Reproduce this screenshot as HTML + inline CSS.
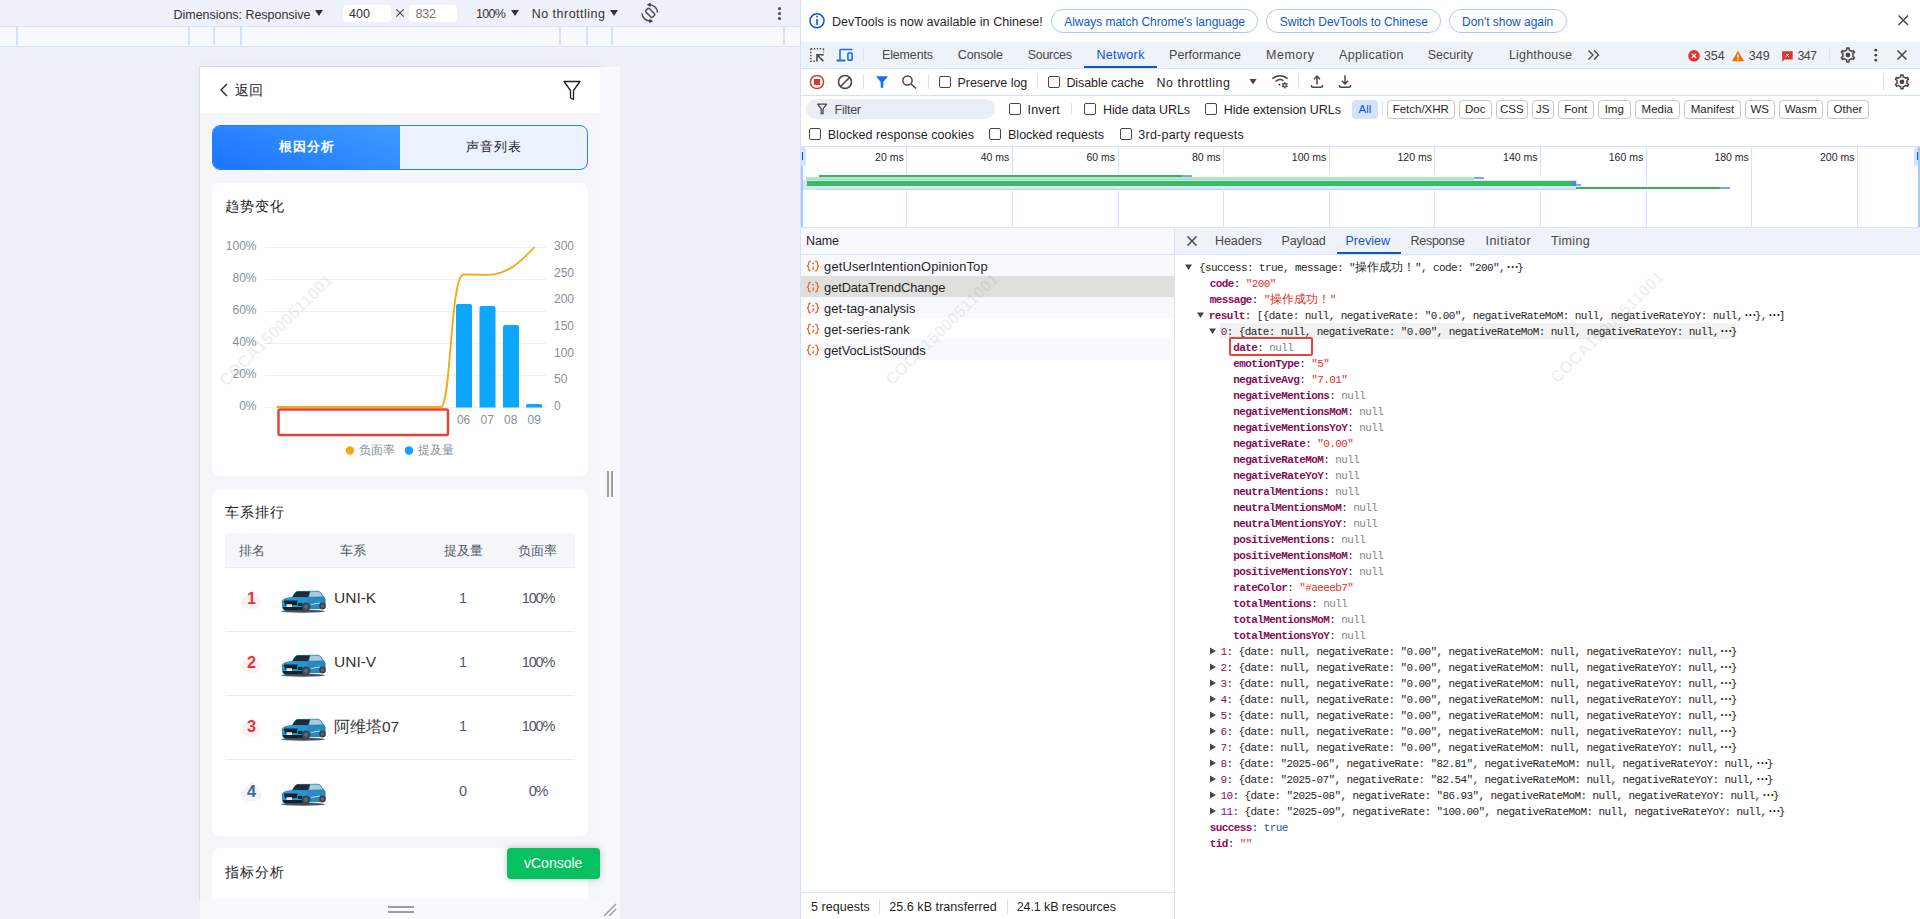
<!DOCTYPE html>
<html><head><meta charset="utf-8">
<style>
*{box-sizing:border-box;margin:0;padding:0}
html,body{width:1920px;height:919px;overflow:hidden;background:#fff;font-family:"Liberation Sans",sans-serif;color:#1f1f1f}
.a{position:absolute;white-space:pre}
#left{position:absolute;left:0;top:0;width:800px;height:919px;background:#eef1f8;overflow:hidden}
#dt{position:absolute;left:800px;top:0;width:1120px;height:919px;background:#fff;border-left:1px solid #d3e3fd;overflow:hidden}
.tb{color:#1f1f1f;line-height:17px}
.tri{width:0;height:0;border-left:4px solid transparent;border-right:4px solid transparent;border-top:6px solid #333}
.th{font-size:13px;color:#4e5969;line-height:16px}
.jl{font-family:"Liberation Mono",monospace;font-size:11px;line-height:12px;letter-spacing:-0.6px;color:#111}
.cj{font-size:12px;letter-spacing:0;font-weight:normal}
.el{letter-spacing:-3.2px;font-weight:bold;font-size:12px}
</style></head><body>
<div id="left">
  <div class="a" style="left:0;top:0;width:800px;height:26px;background:#eef1f9"></div>
  <div class="a" style="left:0;top:26px;width:800px;height:21px;background:#f8f9fd;border-top:1px solid #d3e3fd;border-bottom:1px solid #d3e3fd"></div>
  <div class="a" style="left:16px;top:27px;width:2px;height:18px;background:#d3e3fd"></div>
  <div class="a" style="left:188px;top:27px;width:2px;height:18px;background:#d3e3fd"></div>
  <div class="a" style="left:213px;top:27px;width:2px;height:18px;background:#d3e3fd"></div>
  <div class="a" style="left:240px;top:27px;width:2px;height:18px;background:#d3e3fd"></div>
  <div class="a" style="left:559px;top:27px;width:2px;height:18px;background:#d3e3fd"></div>
  <div class="a" style="left:586px;top:27px;width:2px;height:18px;background:#d3e3fd"></div>
  <div class="a" style="left:611px;top:27px;width:2px;height:18px;background:#d3e3fd"></div>
  <div class="a" style="left:783px;top:27px;width:2px;height:18px;background:#d3e3fd"></div>
  <div class="a tri" style="left:314.5px;top:10px"></div>
  <div class="a" style="left:343px;top:5px;width:48px;height:17px;background:#fff;border-radius:4px"></div>
  <svg class="a" style="left:395px;top:8px" width="10" height="10"><path d="M1.3 1.3 L8.7 8.7 M8.7 1.3 L1.3 8.7" stroke="#474747" stroke-width="1.1"/></svg>
  <div class="a" style="left:409px;top:5px;width:48px;height:17px;background:#fff;border-radius:4px"></div>
  <div class="a tri" style="left:510.5px;top:10px"></div>
  <div class="a tri" style="left:609.5px;top:10px"></div>
  <svg class="a" style="left:636px;top:0px" width="28" height="26" viewBox="0 0 28 26"><g fill="none" stroke="#474747" stroke-width="1.4"><rect x="-2.4" y="-4.7" width="4.8" height="9.4" rx="1" transform="translate(14.2,12.9) rotate(-45)"/><path d="M13.5 4.6 A8.6 8.6 0 0 1 21.6 12.6"/><path d="M5.9 13.3 A8.6 8.6 0 0 0 14.5 21.1"/></g><path d="M10.8 4.4 L14.8 2.4 L14.6 7.2 Z" fill="#474747"/><path d="M17.2 21.3 L13.2 23.3 L13.4 18.6 Z" fill="#474747"/></svg>
  <div class="a" style="left:778px;top:7px;width:3px;height:3px;border-radius:50%;background:#474747;box-shadow:0 5px 0 #474747,0 10px 0 #474747"></div>

  <!-- mobile viewport -->
  <div class="a" style="left:200px;top:67px;width:400px;height:832px;background:#f5f6fa;box-shadow:0 0 0 1px rgba(0,0,0,.07),0 0 14px rgba(0,0,0,.05)"></div>
  <div class="a" style="left:600px;top:67px;width:20px;height:852px;background:#f8f9fd"></div>
  <div class="a" style="left:200px;top:899px;width:420px;height:20px;background:#f8f9fd"></div>
  <div class="a" style="left:607px;top:471px;width:2px;height:26px;background:#9e9e9e"></div>
  <div class="a" style="left:611px;top:471px;width:2px;height:26px;background:#9e9e9e"></div>
  <div class="a" style="left:388px;top:906px;width:26px;height:2px;background:#9e9e9e"></div>
  <div class="a" style="left:388px;top:911px;width:26px;height:2px;background:#9e9e9e"></div>
  <svg class="a" style="left:602px;top:901px" width="18" height="18"><path d="M2 15 L14 3 M7 15 L14 8" stroke="#9e9e9e" stroke-width="1.5"/></svg>

  <!-- header -->
  <div class="a" style="left:200px;top:67px;width:400px;height:46px;background:#fff"></div>
  <svg class="a" style="left:218px;top:82px" width="12" height="16"><path d="M9 2 L3 8 L9 14" fill="none" stroke="#1d2129" stroke-width="1.3"/></svg>
  <div class="a" style="left:235px;top:82px;font-size:14px;color:#1d2129">返回</div>
  <svg class="a" style="left:560px;top:78px" width="24" height="26"><path d="M4 3.5 H20 L13.5 12.5 V21.5 L10.5 20 V12.5 Z" fill="none" stroke="#1d2129" stroke-width="1.3" stroke-linejoin="round"/></svg>

  <!-- segmented -->
  <div class="a" style="left:212px;top:125px;width:376px;height:45px;border:1px solid #2a7ffb;border-radius:8px;background:#ebf3ff;overflow:hidden">
    <div class="a" style="left:0;top:0;width:187px;height:43px;background:linear-gradient(20deg,#1a74ff,#3d9dff)"></div>
  </div>
  <div class="a" style="left:278.5px;top:138px;font-size:13px;letter-spacing:1px;font-weight:bold;color:#fff">根因分析</div>
  <div class="a" style="left:466px;top:138px;font-size:13px;letter-spacing:1px;color:#1d2129">声音列表</div>

  <!-- trend card -->
  <div class="a" style="left:212px;top:183px;width:376px;height:293px;background:#fff;border-radius:8px"></div>
  <div class="a" style="left:225px;top:198px;font-size:14px;letter-spacing:1.1px;color:#1d2129">趋势变化</div>
  <svg class="a" style="left:0;top:0" width="800" height="919" viewBox="0 0 800 919">
<line x1="265" y1="247.5" x2="546" y2="247.5" stroke="#eef0f3" stroke-width="1"/>
<line x1="265" y1="279.5" x2="546" y2="279.5" stroke="#eef0f3" stroke-width="1"/>
<line x1="265" y1="311.5" x2="546" y2="311.5" stroke="#eef0f3" stroke-width="1"/>
<line x1="265" y1="343.5" x2="546" y2="343.5" stroke="#eef0f3" stroke-width="1"/>
<line x1="265" y1="375.5" x2="546" y2="375.5" stroke="#eef0f3" stroke-width="1"/>
<line x1="265" y1="407.5" x2="546" y2="407.5" stroke="#eef0f3" stroke-width="1"/>
<g font-family="Liberation Sans" font-size="12" fill="#86909c">
<text x="256.5" y="250.1" text-anchor="end">100%</text>
<text x="256.5" y="282.1" text-anchor="end">80%</text>
<text x="256.5" y="314.1" text-anchor="end">60%</text>
<text x="256.5" y="346.1" text-anchor="end">40%</text>
<text x="256.5" y="378.1" text-anchor="end">20%</text>
<text x="256.5" y="410.1" text-anchor="end">0%</text>
<text x="554" y="249.8">300</text>
<text x="554" y="276.5">250</text>
<text x="554" y="303.1">200</text>
<text x="554" y="329.8">150</text>
<text x="554" y="356.5">100</text>
<text x="554" y="383.2">50</text>
<text x="554" y="409.8">0</text>
<text x="463.6" y="423.8" text-anchor="middle">06</text>
<text x="487.3" y="423.8" text-anchor="middle">07</text>
<text x="510.7" y="423.8" text-anchor="middle">08</text>
<text x="534.2" y="423.8" text-anchor="middle">09</text>
</g>
<path d="M456 407.5 V306 Q456 304 458 304 H470 Q472 304 472 306 V407.5 Z" fill="#0ca6ff"/>
<path d="M479.5 407.5 V308 Q479.5 306 481.5 306 H493.5 Q495.5 306 495.5 308 V407.5 Z" fill="#0ca6ff"/>
<path d="M503 407.5 V327 Q503 325 505 325 H517 Q519 325 519 327 V407.5 Z" fill="#0ca6ff"/>
<path d="M526 407.5 V405.5 Q526 404 527.5 404 H540.5 Q542 404 542 405.5 V407.5 Z" fill="#0ca6ff"/>
<path d="M276.7 407 L440.9 407 C451 407 450.5 274.5 463.5 274.5 C476 274.5 478 274.9 487.7 274.9 C497 274.9 503 272 511.1 267.9 C519 263.5 527 255 534.5 247" fill="none" stroke="#f7a70f" stroke-width="1.8"/>
<rect x="278.5" y="409.5" width="169.5" height="25.5" rx="1.5" fill="none" stroke="#e5443a" stroke-width="2.5"/>
<circle cx="350" cy="450.5" r="4.2" fill="#f7a70f"/><circle cx="409" cy="450.5" r="4.2" fill="#0ca6ff"/>
</svg>
<div class="a" style="left:359px;top:442px;font-size:12px;color:#86909c">负面率</div>
<div class="a" style="left:418px;top:442px;font-size:12px;color:#86909c">提及量</div>

  <!-- rank card -->
  <div class="a" style="left:212px;top:489px;width:376px;height:347px;background:#fff;border-radius:8px"></div>
  <div class="a" style="left:225px;top:504px;font-size:14px;letter-spacing:1.1px;color:#1d2129">车系排行</div>
  <div class="a" style="left:225px;top:533px;width:350px;height:35px;background:#f5f6fa;border-bottom:1px solid #e9ebef"></div>
  <div class="a th" style="left:239px;top:543px">排名</div>
  <div class="a th" style="left:340px;top:543px">车系</div>
  <div class="a th" style="left:444px;top:543px">提及量</div>
  <div class="a th" style="left:518px;top:543px">负面率</div>
  <svg class="a" style="left:241px;top:588.5px" width="21" height="21" viewBox="0 0 21 21"><path d="M10.5 0.5 C13 4 20.5 8 20.5 14 C20.5 18 17 20.5 10.5 20.5 C4 20.5 0.5 18 0.5 14 C0.5 8 8 4 10.5 0.5 Z" fill="#fdeded" opacity=".8"/></svg>
<div class="a" style="left:241px;width:21px;text-align:center;top:589.2px;font-size:16.3px;font-weight:bold;color:#e5383b">1</div>
<svg class="a" style="left:278px;top:586.0px" width="52" height="30" viewBox="0 0 52 30">
<ellipse cx="25" cy="25.2" rx="22" ry="1.5" fill="#111" opacity=".75"/>
<path d="M4 15 Q5 12.5 9 11.8 L14 11 Q17 6 19 5 L40 4.8 Q43 5.5 45 9.5 L47 11.5 Q48 13 47.5 17 L47 21.5 Q46 23 44 23 L29 23.5 L26 24.5 L8 24.5 Q4.5 24 4 21 Z" fill="#2a89bf"/>
<path d="M5 14.5 Q6 12.5 10 12 L28 11.8 Q30 12.5 29 15 L27 24.5 L8 24.5 Q4.5 24 4.2 21 Z" fill="#2398d4"/>
<path d="M14.5 11 Q17 6 19.5 5.6 L32 5.6 L30 11 Z" fill="#1d2b38"/>
<path d="M32.5 5.6 L41 5.8 Q43 7 44.5 10.5 L31 10.8 Z" fill="#a9cbe0"/>
<path d="M6 14.5 L19.5 14.5 L19 19 L7 19.5 Z" fill="#17222d"/>
<rect x="8.5" y="18.2" width="5.5" height="2.8" fill="#e8ecef"/>
<path d="M5 21 L26 21 L26 24.5 L8 24.5 Q5 24 5 21 Z" fill="#1a1f26"/>
<path d="M20 17 L24.5 16.8 L24 20 L20 20 Z" fill="#1d2630"/>
<circle cx="28" cy="20.8" r="4.3" fill="#39424d"/><circle cx="28" cy="20.8" r="2.3" fill="#5d6670"/>
<circle cx="44.5" cy="20" r="3.4" fill="#39424d"/><circle cx="44.5" cy="20" r="1.8" fill="#5d6670"/>
<path d="M33 18.5 L42 17" stroke="#d7eaf5" stroke-width="1" opacity=".8"/>
</svg>
<div class="a" style="left:334px;top:589.0px;font-size:15.5px;color:#333">UNI-K</div>
<div class="a" style="left:433px;width:60px;text-align:center;top:590.0px;font-size:14.5px;color:#4e5969">1</div>
<div class="a" style="left:508px;width:60px;text-align:center;top:590.0px;font-size:14.5px;letter-spacing:-1.2px;color:#4e5969">100%</div>
<div class="a" style="left:225px;top:631.0px;width:350px;height:1px;background:#e9ebef"></div>
<svg class="a" style="left:241px;top:652.5px" width="21" height="21" viewBox="0 0 21 21"><path d="M10.5 0.5 C13 4 20.5 8 20.5 14 C20.5 18 17 20.5 10.5 20.5 C4 20.5 0.5 18 0.5 14 C0.5 8 8 4 10.5 0.5 Z" fill="#fdeded" opacity=".8"/></svg>
<div class="a" style="left:241px;width:21px;text-align:center;top:653.2px;font-size:16.3px;font-weight:bold;color:#e5383b">2</div>
<svg class="a" style="left:278px;top:650.0px" width="52" height="30" viewBox="0 0 52 30">
<ellipse cx="25" cy="25.2" rx="22" ry="1.5" fill="#111" opacity=".75"/>
<path d="M4 15 Q5 12.5 9 11.8 L14 11 Q17 6 19 5 L40 4.8 Q43 5.5 45 9.5 L47 11.5 Q48 13 47.5 17 L47 21.5 Q46 23 44 23 L29 23.5 L26 24.5 L8 24.5 Q4.5 24 4 21 Z" fill="#2a89bf"/>
<path d="M5 14.5 Q6 12.5 10 12 L28 11.8 Q30 12.5 29 15 L27 24.5 L8 24.5 Q4.5 24 4.2 21 Z" fill="#2398d4"/>
<path d="M14.5 11 Q17 6 19.5 5.6 L32 5.6 L30 11 Z" fill="#1d2b38"/>
<path d="M32.5 5.6 L41 5.8 Q43 7 44.5 10.5 L31 10.8 Z" fill="#a9cbe0"/>
<path d="M6 14.5 L19.5 14.5 L19 19 L7 19.5 Z" fill="#17222d"/>
<rect x="8.5" y="18.2" width="5.5" height="2.8" fill="#e8ecef"/>
<path d="M5 21 L26 21 L26 24.5 L8 24.5 Q5 24 5 21 Z" fill="#1a1f26"/>
<path d="M20 17 L24.5 16.8 L24 20 L20 20 Z" fill="#1d2630"/>
<circle cx="28" cy="20.8" r="4.3" fill="#39424d"/><circle cx="28" cy="20.8" r="2.3" fill="#5d6670"/>
<circle cx="44.5" cy="20" r="3.4" fill="#39424d"/><circle cx="44.5" cy="20" r="1.8" fill="#5d6670"/>
<path d="M33 18.5 L42 17" stroke="#d7eaf5" stroke-width="1" opacity=".8"/>
</svg>
<div class="a" style="left:334px;top:653.0px;font-size:15.5px;color:#333">UNI-V</div>
<div class="a" style="left:433px;width:60px;text-align:center;top:654.0px;font-size:14.5px;color:#4e5969">1</div>
<div class="a" style="left:508px;width:60px;text-align:center;top:654.0px;font-size:14.5px;letter-spacing:-1.2px;color:#4e5969">100%</div>
<div class="a" style="left:225px;top:695.0px;width:350px;height:1px;background:#e9ebef"></div>
<svg class="a" style="left:241px;top:716.5px" width="21" height="21" viewBox="0 0 21 21"><path d="M10.5 0.5 C13 4 20.5 8 20.5 14 C20.5 18 17 20.5 10.5 20.5 C4 20.5 0.5 18 0.5 14 C0.5 8 8 4 10.5 0.5 Z" fill="#fdeded" opacity=".8"/></svg>
<div class="a" style="left:241px;width:21px;text-align:center;top:717.2px;font-size:16.3px;font-weight:bold;color:#e5383b">3</div>
<svg class="a" style="left:278px;top:714.0px" width="52" height="30" viewBox="0 0 52 30">
<ellipse cx="25" cy="25.2" rx="22" ry="1.5" fill="#111" opacity=".75"/>
<path d="M4 15 Q5 12.5 9 11.8 L14 11 Q17 6 19 5 L40 4.8 Q43 5.5 45 9.5 L47 11.5 Q48 13 47.5 17 L47 21.5 Q46 23 44 23 L29 23.5 L26 24.5 L8 24.5 Q4.5 24 4 21 Z" fill="#2a89bf"/>
<path d="M5 14.5 Q6 12.5 10 12 L28 11.8 Q30 12.5 29 15 L27 24.5 L8 24.5 Q4.5 24 4.2 21 Z" fill="#2398d4"/>
<path d="M14.5 11 Q17 6 19.5 5.6 L32 5.6 L30 11 Z" fill="#1d2b38"/>
<path d="M32.5 5.6 L41 5.8 Q43 7 44.5 10.5 L31 10.8 Z" fill="#a9cbe0"/>
<path d="M6 14.5 L19.5 14.5 L19 19 L7 19.5 Z" fill="#17222d"/>
<rect x="8.5" y="18.2" width="5.5" height="2.8" fill="#e8ecef"/>
<path d="M5 21 L26 21 L26 24.5 L8 24.5 Q5 24 5 21 Z" fill="#1a1f26"/>
<path d="M20 17 L24.5 16.8 L24 20 L20 20 Z" fill="#1d2630"/>
<circle cx="28" cy="20.8" r="4.3" fill="#39424d"/><circle cx="28" cy="20.8" r="2.3" fill="#5d6670"/>
<circle cx="44.5" cy="20" r="3.4" fill="#39424d"/><circle cx="44.5" cy="20" r="1.8" fill="#5d6670"/>
<path d="M33 18.5 L42 17" stroke="#d7eaf5" stroke-width="1" opacity=".8"/>
</svg>
<div class="a" style="left:334px;top:717.0px;font-size:15.5px;color:#333">阿维塔07</div>
<div class="a" style="left:433px;width:60px;text-align:center;top:718.0px;font-size:14.5px;color:#4e5969">1</div>
<div class="a" style="left:508px;width:60px;text-align:center;top:718.0px;font-size:14.5px;letter-spacing:-1.2px;color:#4e5969">100%</div>
<div class="a" style="left:225px;top:759.0px;width:350px;height:1px;background:#e9ebef"></div>
<svg class="a" style="left:241px;top:781px" width="21" height="21" viewBox="0 0 21 21"><path d="M10.5 0.5 C13 4 20.5 8 20.5 14 C20.5 18 17 20.5 10.5 20.5 C4 20.5 0.5 18 0.5 14 C0.5 8 8 4 10.5 0.5 Z" fill="#eef0f4" opacity=".8"/></svg>
<div class="a" style="left:241px;width:21px;text-align:center;top:781.7px;font-size:16.3px;font-weight:bold;color:#4a6494">4</div>
<svg class="a" style="left:278px;top:778.5px" width="52" height="30" viewBox="0 0 52 30">
<ellipse cx="25" cy="25.2" rx="22" ry="1.5" fill="#111" opacity=".75"/>
<path d="M4 15 Q5 12.5 9 11.8 L14 11 Q17 6 19 5 L40 4.8 Q43 5.5 45 9.5 L47 11.5 Q48 13 47.5 17 L47 21.5 Q46 23 44 23 L29 23.5 L26 24.5 L8 24.5 Q4.5 24 4 21 Z" fill="#2a89bf"/>
<path d="M5 14.5 Q6 12.5 10 12 L28 11.8 Q30 12.5 29 15 L27 24.5 L8 24.5 Q4.5 24 4.2 21 Z" fill="#2398d4"/>
<path d="M14.5 11 Q17 6 19.5 5.6 L32 5.6 L30 11 Z" fill="#1d2b38"/>
<path d="M32.5 5.6 L41 5.8 Q43 7 44.5 10.5 L31 10.8 Z" fill="#a9cbe0"/>
<path d="M6 14.5 L19.5 14.5 L19 19 L7 19.5 Z" fill="#17222d"/>
<rect x="8.5" y="18.2" width="5.5" height="2.8" fill="#e8ecef"/>
<path d="M5 21 L26 21 L26 24.5 L8 24.5 Q5 24 5 21 Z" fill="#1a1f26"/>
<path d="M20 17 L24.5 16.8 L24 20 L20 20 Z" fill="#1d2630"/>
<circle cx="28" cy="20.8" r="4.3" fill="#39424d"/><circle cx="28" cy="20.8" r="2.3" fill="#5d6670"/>
<circle cx="44.5" cy="20" r="3.4" fill="#39424d"/><circle cx="44.5" cy="20" r="1.8" fill="#5d6670"/>
<path d="M33 18.5 L42 17" stroke="#d7eaf5" stroke-width="1" opacity=".8"/>
</svg>
<div class="a" style="left:433px;width:60px;text-align:center;top:782.5px;font-size:14.5px;color:#4e5969">0</div>
<div class="a" style="left:508px;width:60px;text-align:center;top:782.5px;font-size:14.5px;letter-spacing:-1.2px;color:#4e5969">0%</div>

  <!-- indicator card -->
  <div class="a" style="left:212px;top:848px;width:376px;height:51px;background:#fff;border-radius:8px 8px 0 0"></div>
  <div class="a" style="left:225px;top:864px;font-size:14px;letter-spacing:1.1px;color:#1d2129">指标分析</div>
  <div class="a" style="left:507px;top:848px;width:93px;height:31px;background:#07c160;border-radius:4px;box-shadow:0 0 6px rgba(0,0,0,.25)"></div>
  <div class="a" style="left:524px;top:855px;font-size:14px;color:#fff">vConsole</div>
</div>
<div id="dtw"><div class="a" style="left:800px;top:0px;width:1120px;height:919px;background:#fff;"></div>
<div class="a" style="left:800px;top:0px;width:1px;height:919px;background:#d3e3fd;"></div>
<div class="a" style="left:801px;top:42px;width:1119px;height:26px;background:#eef2f9;"></div>
<div class="a" style="left:801px;top:68px;width:1119px;height:1px;background:#d3e3fd;"></div>
<div class="a" style="left:801px;top:95px;width:1119px;height:1px;background:#d3e3fd;"></div>
<div class="a" style="left:801px;top:146px;width:1119px;height:1px;background:#d3e3fd;"></div>
<div class="a" style="left:801px;top:227px;width:1119px;height:1px;background:#d3e3fd;"></div>
<div class="a" style="left:801px;top:228px;width:373px;height:26px;background:#f8f9fd;"></div>
<div class="a" style="left:1175px;top:228px;width:745px;height:26px;background:#eef2f9;"></div>
<div class="a" style="left:801px;top:254px;width:1119px;height:1px;background:#d3e3fd;"></div>
<div class="a" style="left:1174px;top:228px;width:1px;height:691px;background:#d3e3fd;"></div>
<div class="a" style="left:1084px;top:66px;width:73px;height:2px;background:#0b57d0;"></div>
<div class="a" style="left:1337px;top:252px;width:64px;height:2px;background:#0b57d0;"></div>
<div class="a" style="left:863px;top:47px;width:1px;height:15px;background:#d3e3fd;"></div>
<div class="a" style="left:863px;top:74px;width:1px;height:15px;background:#d3e3fd;"></div>
<div class="a" style="left:928px;top:74px;width:1px;height:15px;background:#d3e3fd;"></div>
<div class="a" style="left:1037px;top:74px;width:1px;height:15px;background:#d3e3fd;"></div>
<div class="a" style="left:1298px;top:74px;width:1px;height:15px;background:#d3e3fd;"></div>
<div class="a" style="left:1829px;top:48px;width:1px;height:14px;background:#d3e3fd;"></div>
<div class="a" style="left:1883px;top:74px;width:1px;height:16px;background:#d3e3fd;"></div>
<div class="a" style="left:1071px;top:103px;width:1px;height:12px;background:#d3e3fd;"></div>
<div class="a" style="left:1382px;top:102px;width:1px;height:14px;background:#d3e3fd;"></div>
<div class="a" style="left:806px;top:99px;width:189px;height:20px;background:#e9eef6;border-radius:10px"></div>
<div class="a" style="left:939px;top:76px;width:12px;height:12px;border:1.5px solid #474747;border-radius:2px"></div>
<div class="a" style="left:1048px;top:76px;width:12px;height:12px;border:1.5px solid #474747;border-radius:2px"></div>
<div class="a" style="left:1009px;top:103px;width:12px;height:12px;border:1.5px solid #474747;border-radius:2px"></div>
<div class="a" style="left:1084px;top:103px;width:12px;height:12px;border:1.5px solid #474747;border-radius:2px"></div>
<div class="a" style="left:1205px;top:103px;width:12px;height:12px;border:1.5px solid #474747;border-radius:2px"></div>
<div class="a" style="left:809px;top:128px;width:12px;height:12px;border:1.5px solid #474747;border-radius:2px"></div>
<div class="a" style="left:989px;top:128px;width:12px;height:12px;border:1.5px solid #474747;border-radius:2px"></div>
<div class="a" style="left:1120px;top:128px;width:12px;height:12px;border:1.5px solid #474747;border-radius:2px"></div>
<div class="a" style="left:1352px;top:100px;width:26px;height:19px;background:#d3e3fd;border-radius:4px"></div>
<div class="a" style="left:1387px;top:100px;width:67.5px;height:19px;border:1px solid #c7c7c7;border-radius:4px"></div>
<div class="a" style="left:1459px;top:100px;width:32.5px;height:19px;border:1px solid #c7c7c7;border-radius:4px"></div>
<div class="a" style="left:1496px;top:100px;width:31.5px;height:19px;border:1px solid #c7c7c7;border-radius:4px"></div>
<div class="a" style="left:1532px;top:100px;width:21.5px;height:19px;border:1px solid #c7c7c7;border-radius:4px"></div>
<div class="a" style="left:1558px;top:100px;width:35.5px;height:19px;border:1px solid #c7c7c7;border-radius:4px"></div>
<div class="a" style="left:1598px;top:100px;width:32.5px;height:19px;border:1px solid #c7c7c7;border-radius:4px"></div>
<div class="a" style="left:1635px;top:100px;width:44.5px;height:19px;border:1px solid #c7c7c7;border-radius:4px"></div>
<div class="a" style="left:1684px;top:100px;width:57.0px;height:19px;border:1px solid #c7c7c7;border-radius:4px"></div>
<div class="a" style="left:1745px;top:100px;width:29.5px;height:19px;border:1px solid #c7c7c7;border-radius:4px"></div>
<div class="a" style="left:1779px;top:100px;width:43.5px;height:19px;border:1px solid #c7c7c7;border-radius:4px"></div>
<div class="a" style="left:1827px;top:100px;width:42.0px;height:19px;border:1px solid #c7c7c7;border-radius:4px"></div>
<div class="a" style="left:1051px;top:9px;width:207px;height:24px;border:1px solid #a8c7fa;border-radius:12px"></div>
<div class="a" style="left:1266px;top:9px;width:175px;height:24px;border:1px solid #a8c7fa;border-radius:12px"></div>
<div class="a" style="left:1449px;top:9px;width:118px;height:24px;border:1px solid #a8c7fa;border-radius:12px"></div>
<div class="a" style="left:906px;top:147px;width:1px;height:80px;background:#d3e3fd;"></div>
<div class="a" style="left:1012px;top:147px;width:1px;height:80px;background:#d3e3fd;"></div>
<div class="a" style="left:1118px;top:147px;width:1px;height:80px;background:#d3e3fd;"></div>
<div class="a" style="left:1223px;top:147px;width:1px;height:80px;background:#d3e3fd;"></div>
<div class="a" style="left:1329px;top:147px;width:1px;height:80px;background:#d3e3fd;"></div>
<div class="a" style="left:1434px;top:147px;width:1px;height:80px;background:#d3e3fd;"></div>
<div class="a" style="left:1540px;top:147px;width:1px;height:80px;background:#d3e3fd;"></div>
<div class="a" style="left:1646px;top:147px;width:1px;height:80px;background:#d3e3fd;"></div>
<div class="a" style="left:1751px;top:147px;width:1px;height:80px;background:#d3e3fd;"></div>
<div class="a" style="left:1857px;top:147px;width:1px;height:80px;background:#d3e3fd;"></div>
<div class="a" style="left:801px;top:147px;width:2px;height:80px;background:#a8c7fa;"></div>
<div class="a" style="left:801px;top:147px;width:5px;height:19px;background:#d3e3fd;border-radius:0 3px 3px 0"></div>
<div class="a" style="left:802px;top:152px;width:1px;height:8px;background:#0b57d0;"></div>
<div class="a" style="left:1914px;top:147px;width:6px;height:19px;background:#d3e3fd;border-radius:3px 0 0 3px"></div>
<div class="a" style="left:1917px;top:152px;width:1px;height:8px;background:#0b57d0;"></div>
<div class="a" style="left:1918px;top:147px;width:2px;height:80px;background:#a8c7fa;"></div>
<div class="a" style="left:803px;top:174px;width:774px;height:17px;background:#fff;"></div>
<div class="a" style="left:1576px;top:186px;width:155px;height:4px;background:#fff;"></div>
<div class="a" style="left:803px;top:180px;width:774px;height:10px;background:#d6e4fc;"></div>
<div class="a" style="left:806px;top:177px;width:668px;height:2px;background:#b5e8c2;"></div>
<div class="a" style="left:806px;top:179px;width:668px;height:1px;background:#9fd8bb;"></div>
<div class="a" style="left:1474px;top:177px;width:10px;height:2px;background:#7aa7f2;"></div>
<div class="a" style="left:819px;top:175px;width:363px;height:2px;background:#35b85a;"></div>
<div class="a" style="left:1182px;top:175px;width:10px;height:2px;background:#7aa7f2;"></div>
<div class="a" style="left:807px;top:181px;width:766px;height:5px;background:#36bd5c;"></div>
<div class="a" style="left:815px;top:189px;width:762px;height:1px;background:#b3dccb;"></div>
<div class="a" style="left:1572px;top:181px;width:4px;height:5px;background:#4d88ee;"></div>
<div class="a" style="left:1576px;top:184px;width:5px;height:2px;background:#7aa7f2;"></div>
<div class="a" style="left:1576px;top:187px;width:144px;height:2px;background:#36b45b;"></div>
<div class="a" style="left:1720px;top:187px;width:10px;height:2px;background:#7aa7f2;"></div>
<div class="a" style="left:801px;top:255px;width:373px;height:21px;background:#f8f9fd;"></div>
<div class="a" style="left:801px;top:276px;width:373px;height:21px;background:#dfe0dd;"></div>
<div class="a" style="left:801px;top:297px;width:373px;height:21px;background:#f8f9fd;"></div>
<div class="a" style="left:801px;top:318px;width:373px;height:21px;background:#fff;"></div>
<div class="a" style="left:801px;top:339px;width:373px;height:21px;background:#f8f9fd;"></div>
<div class="a" style="left:801px;top:892px;width:373px;height:1px;background:#d3e3fd;"></div>
<div class="a" style="left:879px;top:899px;width:1px;height:16px;background:#d3e3fd;"></div>
<div class="a" style="left:1007px;top:899px;width:1px;height:16px;background:#d3e3fd;"></div>
<div class="a" style="left:1220px;top:323px;width:516px;height:16px;background:#f1f1f1;"></div>
<div class="a" style="left:1229px;top:337px;width:84px;height:19px;border:2.5px solid #e5443a;border-radius:2px"></div><svg class="a" style="left:800px;top:0" width="1120" height="919" viewBox="800 0 1120 919" fill="none">
<circle cx="817" cy="20.8" r="7" stroke="#0b57d0" stroke-width="1.5"/><rect x="816.2" y="19" width="1.6" height="6" fill="#0b57d0"/><rect x="816.2" y="15.7" width="1.6" height="1.7" fill="#0b57d0"/>
<path d="M1898.5 15.5 L1908 25 M1908 15.5 L1898.5 25" stroke="#474747" stroke-width="1.5"/>
<path d="M810.8 48.8 H823.5 M810.8 48.8 V61.2 H815.5 M823.5 48.8 V52.5" stroke="#474747" stroke-width="1.4" stroke-dasharray="1.4 1.6"/><path d="M817 61.5 V54.8 H823.8 M817 54.8 L823.3 61.1" stroke="#474747" stroke-width="1.6"/>
<path d="M840 60.5 V50.3 Q840 49.5 840.8 49.5 H851.8" stroke="#1a6cf0" stroke-width="1.6" stroke-linecap="round"/><path d="M837.3 60.6 H844.7" stroke="#1a6cf0" stroke-width="2" stroke-linecap="round"/><rect x="847.9" y="53" width="4.2" height="7.1" rx="0.8" stroke="#1a6cf0" stroke-width="1.6"/>
<circle cx="817" cy="82" r="6.6" stroke="#dc362e" stroke-width="1.5"/><rect x="814" y="79" width="6" height="6" fill="#dc362e"/>
<circle cx="845" cy="82" r="6.5" stroke="#474747" stroke-width="1.6"/><path d="M849.5 77.5 L840.5 86.5" stroke="#474747" stroke-width="1.6"/>
<path d="M876 76.3 H888 L883.3 82 V87.8 H880.7 V82 Z" fill="#1a6cf0"/>
<circle cx="907.5" cy="80.5" r="4.6" stroke="#474747" stroke-width="1.5"/><path d="M911 84 L916 88.5" stroke="#474747" stroke-width="1.6"/>
<path d="M1249.5 79 H1256.5 L1253 84.5 Z" fill="#474747"/>
<path d="M1272.5 78.8 A11 11 0 0 1 1287.5 78.8 M1275.5 81.5 A7 7 0 0 1 1283.5 80.6" stroke="#474747" stroke-width="1.5"/><path d="M1278 84.6 L1280.2 83.3 V85.9 Z" fill="#474747"/>
<polygon points="1283.60,83.12 1284.18,82.88 1284.23,81.95 1285.37,81.95 1285.42,82.88 1286.00,83.12 1286.50,83.50 1287.33,83.08 1287.90,84.07 1287.12,84.58 1287.20,85.20 1287.12,85.82 1287.90,86.33 1287.33,87.32 1286.50,86.90 1286.00,87.28 1285.42,87.52 1285.37,88.45 1284.23,88.45 1284.18,87.52 1283.60,87.28 1283.10,86.90 1282.27,87.32 1281.70,86.33 1282.48,85.82 1282.40,85.20 1282.48,84.58 1281.70,84.07 1282.27,83.08 1283.10,83.50" fill="#474747"/><circle cx="1284.8" cy="85.2" r="1" fill="#fff"/>
<path d="M1317 84.6 V76.3 M1314 79.2 L1317 76.1 L1320 79.2 M1311.5 85 V86 Q1311.5 87.3 1313 87.3 H1321 Q1322.5 87.3 1322.5 86 V85" stroke="#474747" stroke-width="1.5"/>
<path d="M1345 75.3 V83.8 M1341.8 80.8 L1345 84 L1348.2 80.8 M1339.5 85 V86 Q1339.5 87.3 1341 87.3 H1349 Q1350.5 87.3 1350.5 86 V85" stroke="#474747" stroke-width="1.5"/>
<path d="M817.6 104.2 H826.6 L823 108.8 V113.6 H821.2 V108.8 Z" stroke="#474747" stroke-width="1.3" stroke-linejoin="round"/>
<path d="M1588.5 50.5 L1593 55 L1588.5 59.5 M1594 50.5 L1598.5 55 L1594 59.5" stroke="#474747" stroke-width="1.4"/>
<circle cx="1694" cy="55.8" r="5.8" fill="#dc362e"/><path d="M1691.8 53.6 L1696.2 58 M1696.2 53.6 L1691.8 58" stroke="#fff" stroke-width="1.2"/>
<path d="M1738 50.8 L1744.2 61.2 H1731.8 Z" fill="#e8710a"/><rect x="1737.4" y="54.3" width="1.3" height="3.6" fill="#fff"/><rect x="1737.4" y="58.6" width="1.3" height="1.3" fill="#fff"/>
<path d="M1782 51.3 H1792.7 V59.5 H1784.3 L1782.3 61.8 Z" fill="#dc362e"/><path d="M1786 54 L1788.6 56.6 M1788.6 54 L1786 56.6" stroke="#fff" stroke-width="1"/>
<polygon points="1845.35,50.58 1846.67,50.05 1846.80,48.09 1849.00,48.09 1849.13,50.05 1850.45,50.58 1851.57,51.46 1853.34,50.59 1854.44,52.49 1852.80,53.59 1853.00,55.00 1852.80,56.41 1854.44,57.51 1853.34,59.41 1851.57,58.54 1850.45,59.42 1849.13,59.95 1849.00,61.91 1846.80,61.91 1846.67,59.95 1845.35,59.42 1844.23,58.54 1842.46,59.41 1841.36,57.51 1843.00,56.41 1842.80,55.00 1843.00,53.59 1841.36,52.49 1842.46,50.59 1844.23,51.46" stroke="#474747" stroke-width="1.5" stroke-linejoin="round"/><circle cx="1847.9" cy="55" r="2.4" fill="#474747"/>
<polygon points="1899.45,77.38 1900.77,76.85 1900.90,74.89 1903.10,74.89 1903.23,76.85 1904.55,77.38 1905.67,78.26 1907.44,77.39 1908.54,79.29 1906.90,80.39 1907.10,81.80 1906.90,83.21 1908.54,84.31 1907.44,86.21 1905.67,85.34 1904.55,86.22 1903.23,86.75 1903.10,88.71 1900.90,88.71 1900.77,86.75 1899.45,86.22 1898.33,85.34 1896.56,86.21 1895.46,84.31 1897.10,83.21 1896.90,81.80 1897.10,80.39 1895.46,79.29 1896.56,77.39 1898.33,78.26" stroke="#474747" stroke-width="1.5" stroke-linejoin="round"/><circle cx="1902" cy="81.8" r="2.4" fill="#474747"/>
<circle cx="1875.8" cy="50.2" r="1.4" fill="#474747"/><circle cx="1875.8" cy="55.2" r="1.4" fill="#474747"/><circle cx="1875.8" cy="60.2" r="1.4" fill="#474747"/>
<path d="M1897.5 50.5 L1906.5 59.5 M1906.5 50.5 L1897.5 59.5" stroke="#474747" stroke-width="1.5"/>
<path d="M1187.5 236.5 L1196.5 245.5 M1196.5 236.5 L1187.5 245.5" stroke="#474747" stroke-width="1.5"/>
<g stroke="#e8692c" stroke-width="1.2" fill="none"><path d="M810.8 261.2 Q808.6 261.2 808.6 263.5 Q808.6 266 806.8 266 Q808.6 266 808.6 268.5 Q808.6 270.8 810.8 270.8"/><path d="M815.2 261.2 Q817.4 261.2 817.4 263.5 Q817.4 266 819.2 266 Q817.4 266 817.4 268.5 Q817.4 270.8 815.2 270.8"/></g><circle cx="813.2" cy="263.6" r="0.95" fill="#e8692c"/><path d="M813.4 266.6 V268 L812.6 269.6" stroke="#e8692c" stroke-width="1.3" fill="none"/>
<g stroke="#e8692c" stroke-width="1.2" fill="none"><path d="M810.8 282.2 Q808.6 282.2 808.6 284.5 Q808.6 287 806.8 287 Q808.6 287 808.6 289.5 Q808.6 291.8 810.8 291.8"/><path d="M815.2 282.2 Q817.4 282.2 817.4 284.5 Q817.4 287 819.2 287 Q817.4 287 817.4 289.5 Q817.4 291.8 815.2 291.8"/></g><circle cx="813.2" cy="284.6" r="0.95" fill="#e8692c"/><path d="M813.4 287.6 V289 L812.6 290.6" stroke="#e8692c" stroke-width="1.3" fill="none"/>
<g stroke="#e8692c" stroke-width="1.2" fill="none"><path d="M810.8 303.2 Q808.6 303.2 808.6 305.5 Q808.6 308 806.8 308 Q808.6 308 808.6 310.5 Q808.6 312.8 810.8 312.8"/><path d="M815.2 303.2 Q817.4 303.2 817.4 305.5 Q817.4 308 819.2 308 Q817.4 308 817.4 310.5 Q817.4 312.8 815.2 312.8"/></g><circle cx="813.2" cy="305.6" r="0.95" fill="#e8692c"/><path d="M813.4 308.6 V310 L812.6 311.6" stroke="#e8692c" stroke-width="1.3" fill="none"/>
<g stroke="#e8692c" stroke-width="1.2" fill="none"><path d="M810.8 324.2 Q808.6 324.2 808.6 326.5 Q808.6 329 806.8 329 Q808.6 329 808.6 331.5 Q808.6 333.8 810.8 333.8"/><path d="M815.2 324.2 Q817.4 324.2 817.4 326.5 Q817.4 329 819.2 329 Q817.4 329 817.4 331.5 Q817.4 333.8 815.2 333.8"/></g><circle cx="813.2" cy="326.6" r="0.95" fill="#e8692c"/><path d="M813.4 329.6 V331 L812.6 332.6" stroke="#e8692c" stroke-width="1.3" fill="none"/>
<g stroke="#e8692c" stroke-width="1.2" fill="none"><path d="M810.8 345.2 Q808.6 345.2 808.6 347.5 Q808.6 350 806.8 350 Q808.6 350 808.6 352.5 Q808.6 354.8 810.8 354.8"/><path d="M815.2 345.2 Q817.4 345.2 817.4 347.5 Q817.4 350 819.2 350 Q817.4 350 817.4 352.5 Q817.4 354.8 815.2 354.8"/></g><circle cx="813.2" cy="347.6" r="0.95" fill="#e8692c"/><path d="M813.4 350.6 V352 L812.6 353.6" stroke="#e8692c" stroke-width="1.3" fill="none"/>
<path d="M1185 264.5 H1192 L1188.5 270 Z" fill="#474747"/>
<path d="M1197 312.5 H1204 L1200.5 318 Z" fill="#474747"/>
<path d="M1209 328.5 H1216 L1212.5 334 Z" fill="#474747"/>
<path d="M1210 647.5 V654.5 L1216 651 Z" fill="#474747"/>
<path d="M1210 663.5 V670.5 L1216 667 Z" fill="#474747"/>
<path d="M1210 679.5 V686.5 L1216 683 Z" fill="#474747"/>
<path d="M1210 695.5 V702.5 L1216 699 Z" fill="#474747"/>
<path d="M1210 711.5 V718.5 L1216 715 Z" fill="#474747"/>
<path d="M1210 727.5 V734.5 L1216 731 Z" fill="#474747"/>
<path d="M1210 743.5 V750.5 L1216 747 Z" fill="#474747"/>
<path d="M1210 759.5 V766.5 L1216 763 Z" fill="#474747"/>
<path d="M1210 775.5 V782.5 L1216 779 Z" fill="#474747"/>
<path d="M1210 791.5 V798.5 L1216 795 Z" fill="#474747"/>
<path d="M1210 807.5 V814.5 L1216 811 Z" fill="#474747"/>
</svg><div class="a jl" style="left:1199px;top:261.7px"><span style="color:#1f1f1f">{success: true, message: "</span><span class="cj" style="color:#1f1f1f">操</span><span class="cj" style="color:#1f1f1f">作</span><span class="cj" style="color:#1f1f1f">成</span><span class="cj" style="color:#1f1f1f">功</span><span class="cj" style="color:#1f1f1f">！</span><span style="color:#1f1f1f">", code: "200",</span><span class="el" style="color:#1f1f1f">···</span><span style="color:#1f1f1f">}</span></div>
<div class="a jl" style="left:1209.8px;top:277.7px"><span style="color:#8b0b55;font-weight:bold">code</span><span style="color:#1f1f1f">: </span><span style="color:#d93025">"200"</span></div>
<div class="a jl" style="left:1209.8px;top:293.7px"><span style="color:#8b0b55;font-weight:bold">message</span><span style="color:#1f1f1f">: </span><span style="color:#d93025">"</span><span class="cj" style="color:#d93025">操</span><span class="cj" style="color:#d93025">作</span><span class="cj" style="color:#d93025">成</span><span class="cj" style="color:#d93025">功</span><span class="cj" style="color:#d93025">！</span><span style="color:#d93025">"</span></div>
<div class="a jl" style="left:1208.7px;top:309.7px"><span style="color:#8b0b55;font-weight:bold">result</span><span style="color:#1f1f1f">: [{date: null, negativeRate: "0.00", negativeRateMoM: null, negativeRateYoY: null,</span><span class="el" style="color:#1f1f1f">···</span><span style="color:#1f1f1f">},</span><span class="el" style="color:#1f1f1f">···</span><span style="color:#1f1f1f">]</span></div>
<div class="a jl" style="left:1220.7px;top:325.7px"><span style="color:#8b0b55">0</span><span style="color:#1f1f1f">: {date: null, negativeRate: "0.00", negativeRateMoM: null, negativeRateYoY: null,</span><span class="el" style="color:#1f1f1f">···</span><span style="color:#1f1f1f">}</span></div>
<div class="a jl" style="left:1233.3px;top:341.7px"><span style="color:#8b0b55;font-weight:bold">date</span><span style="color:#1f1f1f">: </span><span style="color:#80868b;font-weight:normal">null</span></div>
<div class="a jl" style="left:1233.3px;top:357.7px"><span style="color:#8b0b55;font-weight:bold">emotionType</span><span style="color:#1f1f1f">: </span><span style="color:#d93025">"5"</span></div>
<div class="a jl" style="left:1233.3px;top:373.7px"><span style="color:#8b0b55;font-weight:bold">negativeAvg</span><span style="color:#1f1f1f">: </span><span style="color:#d93025">"7.01"</span></div>
<div class="a jl" style="left:1233.3px;top:389.7px"><span style="color:#8b0b55;font-weight:bold">negativeMentions</span><span style="color:#1f1f1f">: </span><span style="color:#80868b;font-weight:normal">null</span></div>
<div class="a jl" style="left:1233.3px;top:405.7px"><span style="color:#8b0b55;font-weight:bold">negativeMentionsMoM</span><span style="color:#1f1f1f">: </span><span style="color:#80868b;font-weight:normal">null</span></div>
<div class="a jl" style="left:1233.3px;top:421.7px"><span style="color:#8b0b55;font-weight:bold">negativeMentionsYoY</span><span style="color:#1f1f1f">: </span><span style="color:#80868b;font-weight:normal">null</span></div>
<div class="a jl" style="left:1233.3px;top:437.7px"><span style="color:#8b0b55;font-weight:bold">negativeRate</span><span style="color:#1f1f1f">: </span><span style="color:#d93025">"0.00"</span></div>
<div class="a jl" style="left:1233.3px;top:453.7px"><span style="color:#8b0b55;font-weight:bold">negativeRateMoM</span><span style="color:#1f1f1f">: </span><span style="color:#80868b;font-weight:normal">null</span></div>
<div class="a jl" style="left:1233.3px;top:469.7px"><span style="color:#8b0b55;font-weight:bold">negativeRateYoY</span><span style="color:#1f1f1f">: </span><span style="color:#80868b;font-weight:normal">null</span></div>
<div class="a jl" style="left:1233.3px;top:485.7px"><span style="color:#8b0b55;font-weight:bold">neutralMentions</span><span style="color:#1f1f1f">: </span><span style="color:#80868b;font-weight:normal">null</span></div>
<div class="a jl" style="left:1233.3px;top:501.7px"><span style="color:#8b0b55;font-weight:bold">neutralMentionsMoM</span><span style="color:#1f1f1f">: </span><span style="color:#80868b;font-weight:normal">null</span></div>
<div class="a jl" style="left:1233.3px;top:517.7px"><span style="color:#8b0b55;font-weight:bold">neutralMentionsYoY</span><span style="color:#1f1f1f">: </span><span style="color:#80868b;font-weight:normal">null</span></div>
<div class="a jl" style="left:1233.3px;top:533.7px"><span style="color:#8b0b55;font-weight:bold">positiveMentions</span><span style="color:#1f1f1f">: </span><span style="color:#80868b;font-weight:normal">null</span></div>
<div class="a jl" style="left:1233.3px;top:549.7px"><span style="color:#8b0b55;font-weight:bold">positiveMentionsMoM</span><span style="color:#1f1f1f">: </span><span style="color:#80868b;font-weight:normal">null</span></div>
<div class="a jl" style="left:1233.3px;top:565.7px"><span style="color:#8b0b55;font-weight:bold">positiveMentionsYoY</span><span style="color:#1f1f1f">: </span><span style="color:#80868b;font-weight:normal">null</span></div>
<div class="a jl" style="left:1233.3px;top:581.7px"><span style="color:#8b0b55;font-weight:bold">rateColor</span><span style="color:#1f1f1f">: </span><span style="color:#d93025">"#aeeeb7"</span></div>
<div class="a jl" style="left:1233.3px;top:597.7px"><span style="color:#8b0b55;font-weight:bold">totalMentions</span><span style="color:#1f1f1f">: </span><span style="color:#80868b;font-weight:normal">null</span></div>
<div class="a jl" style="left:1233.3px;top:613.7px"><span style="color:#8b0b55;font-weight:bold">totalMentionsMoM</span><span style="color:#1f1f1f">: </span><span style="color:#80868b;font-weight:normal">null</span></div>
<div class="a jl" style="left:1233.3px;top:629.7px"><span style="color:#8b0b55;font-weight:bold">totalMentionsYoY</span><span style="color:#1f1f1f">: </span><span style="color:#80868b;font-weight:normal">null</span></div>
<div class="a jl" style="left:1220.5px;top:645.7px"><span style="color:#8b0b55">1</span><span style="color:#1f1f1f">: {date: null, negativeRate: "0.00", negativeRateMoM: null, negativeRateYoY: null,</span><span class="el" style="color:#1f1f1f">···</span><span style="color:#1f1f1f">}</span></div>
<div class="a jl" style="left:1220.5px;top:661.7px"><span style="color:#8b0b55">2</span><span style="color:#1f1f1f">: {date: null, negativeRate: "0.00", negativeRateMoM: null, negativeRateYoY: null,</span><span class="el" style="color:#1f1f1f">···</span><span style="color:#1f1f1f">}</span></div>
<div class="a jl" style="left:1220.5px;top:677.7px"><span style="color:#8b0b55">3</span><span style="color:#1f1f1f">: {date: null, negativeRate: "0.00", negativeRateMoM: null, negativeRateYoY: null,</span><span class="el" style="color:#1f1f1f">···</span><span style="color:#1f1f1f">}</span></div>
<div class="a jl" style="left:1220.5px;top:693.7px"><span style="color:#8b0b55">4</span><span style="color:#1f1f1f">: {date: null, negativeRate: "0.00", negativeRateMoM: null, negativeRateYoY: null,</span><span class="el" style="color:#1f1f1f">···</span><span style="color:#1f1f1f">}</span></div>
<div class="a jl" style="left:1220.5px;top:709.7px"><span style="color:#8b0b55">5</span><span style="color:#1f1f1f">: {date: null, negativeRate: "0.00", negativeRateMoM: null, negativeRateYoY: null,</span><span class="el" style="color:#1f1f1f">···</span><span style="color:#1f1f1f">}</span></div>
<div class="a jl" style="left:1220.5px;top:725.7px"><span style="color:#8b0b55">6</span><span style="color:#1f1f1f">: {date: null, negativeRate: "0.00", negativeRateMoM: null, negativeRateYoY: null,</span><span class="el" style="color:#1f1f1f">···</span><span style="color:#1f1f1f">}</span></div>
<div class="a jl" style="left:1220.5px;top:741.7px"><span style="color:#8b0b55">7</span><span style="color:#1f1f1f">: {date: null, negativeRate: "0.00", negativeRateMoM: null, negativeRateYoY: null,</span><span class="el" style="color:#1f1f1f">···</span><span style="color:#1f1f1f">}</span></div>
<div class="a jl" style="left:1220.5px;top:757.7px"><span style="color:#8b0b55">8</span><span style="color:#1f1f1f">: {date: "2025-06", negativeRate: "82.81", negativeRateMoM: null, negativeRateYoY: null,</span><span class="el" style="color:#1f1f1f">···</span><span style="color:#1f1f1f">}</span></div>
<div class="a jl" style="left:1220.5px;top:773.7px"><span style="color:#8b0b55">9</span><span style="color:#1f1f1f">: {date: "2025-07", negativeRate: "82.54", negativeRateMoM: null, negativeRateYoY: null,</span><span class="el" style="color:#1f1f1f">···</span><span style="color:#1f1f1f">}</span></div>
<div class="a jl" style="left:1220.5px;top:789.7px"><span style="color:#8b0b55">10</span><span style="color:#1f1f1f">: {date: "2025-08", negativeRate: "86.93", negativeRateMoM: null, negativeRateYoY: null,</span><span class="el" style="color:#1f1f1f">···</span><span style="color:#1f1f1f">}</span></div>
<div class="a jl" style="left:1220.5px;top:805.7px"><span style="color:#8b0b55">11</span><span style="color:#1f1f1f">: {date: "2025-09", negativeRate: "100.00", negativeRateMoM: null, negativeRateYoY: null,</span><span class="el" style="color:#1f1f1f">···</span><span style="color:#1f1f1f">}</span></div>
<div class="a jl" style="left:1209.7px;top:821.7px"><span style="color:#8b0b55;font-weight:bold">success</span><span style="color:#1f1f1f">: </span><span style="color:#1c4fb8">true</span></div>
<div class="a jl" style="left:1209.7px;top:837.7px"><span style="color:#8b0b55;font-weight:bold">tid</span><span style="color:#1f1f1f">: </span><span style="color:#d93025">""</span></div></div><div id="t0" class="a" style="left:832.00px;top:16.32px;font-size:12.5px;line-height:12.5px;color:#1f1f1f;letter-spacing:0.046px;">DevTools is now available in Chinese!</div>
<div id="t1" class="a" style="left:1064.20px;top:15.74px;font-size:12px;line-height:12px;color:#0b57d0;letter-spacing:-0.009px;">Always match Chrome's language</div>
<div id="t2" class="a" style="left:1279.80px;top:15.74px;font-size:12px;line-height:12px;color:#0b57d0;letter-spacing:-0.029px;">Switch DevTools to Chinese</div>
<div id="t3" class="a" style="left:1462.00px;top:15.74px;font-size:12px;line-height:12px;color:#0b57d0;letter-spacing:-0.026px;">Don't show again</div>
<div id="t4" class="a" style="left:882.00px;top:49.32px;font-size:12.5px;line-height:12.5px;color:#474747;letter-spacing:-0.158px;">Elements</div>
<div id="t5" class="a" style="left:957.80px;top:49.32px;font-size:12.5px;line-height:12.5px;color:#474747;letter-spacing:-0.112px;">Console</div>
<div id="t6" class="a" style="left:1027.70px;top:49.32px;font-size:12.5px;line-height:12.5px;color:#474747;letter-spacing:-0.277px;">Sources</div>
<div id="t7" class="a" style="left:1096.40px;top:49.32px;font-size:12.5px;line-height:12.5px;color:#0b57d0;letter-spacing:0.359px;">Network</div>
<div id="t8" class="a" style="left:1169.00px;top:49.32px;font-size:12.5px;line-height:12.5px;color:#474747;letter-spacing:0.044px;">Performance</div>
<div id="t9" class="a" style="left:1266.00px;top:49.32px;font-size:12.5px;line-height:12.5px;color:#474747;letter-spacing:0.569px;">Memory</div>
<div id="t10" class="a" style="left:1339.00px;top:49.32px;font-size:12.5px;line-height:12.5px;color:#474747;letter-spacing:0.324px;">Application</div>
<div id="t11" class="a" style="left:1427.70px;top:49.32px;font-size:12.5px;line-height:12.5px;color:#474747;letter-spacing:0.021px;">Security</div>
<div id="t12" class="a" style="left:1508.90px;top:49.32px;font-size:12.5px;line-height:12.5px;color:#474747;letter-spacing:0.203px;">Lighthouse</div>
<div id="t13" class="a" style="left:1704.00px;top:49.82px;font-size:12.5px;line-height:12.5px;color:#474747;letter-spacing:-0.080px;">354</div>
<div id="t14" class="a" style="left:1748.80px;top:49.82px;font-size:12.5px;line-height:12.5px;color:#474747;letter-spacing:-0.030px;">349</div>
<div id="t15" class="a" style="left:1797.60px;top:50.32px;font-size:12.5px;line-height:12.5px;color:#474747;letter-spacing:-0.730px;">347</div>
<div id="t16" class="a" style="left:957.50px;top:77.32px;font-size:12.5px;line-height:12.5px;color:#1f1f1f;letter-spacing:-0.035px;">Preserve log</div>
<div id="t17" class="a" style="left:1066.40px;top:77.32px;font-size:12.5px;line-height:12.5px;color:#1f1f1f;letter-spacing:-0.076px;">Disable cache</div>
<div id="t18" class="a" style="left:1156.60px;top:77.32px;font-size:12.5px;line-height:12.5px;color:#1f1f1f;letter-spacing:0.499px;">No throttling</div>
<div id="t19" class="a" style="left:834.50px;top:104.02px;font-size:12.5px;line-height:12.5px;color:#474747;letter-spacing:-0.256px;">Filter</div>
<div id="t20" class="a" style="left:1027.50px;top:104.32px;font-size:12.5px;line-height:12.5px;color:#1f1f1f;letter-spacing:0.207px;">Invert</div>
<div id="t21" class="a" style="left:1103.00px;top:104.32px;font-size:12.5px;line-height:12.5px;color:#1f1f1f;letter-spacing:-0.096px;">Hide data URLs</div>
<div id="t22" class="a" style="left:1223.75px;top:104.32px;font-size:12.5px;line-height:12.5px;color:#1f1f1f;letter-spacing:-0.010px;">Hide extension URLs</div>
<div id="t23" class="a" style="left:1265.00px;width:200px;text-align:center;top:104.17px;font-size:11.5px;line-height:11.5px;color:#0b57d0;">All</div>
<div id="t24" class="a" style="left:1320.75px;width:200px;text-align:center;top:104.17px;font-size:11.5px;line-height:11.5px;color:#1f1f1f;">Fetch/XHR</div>
<div id="t25" class="a" style="left:1375.25px;width:200px;text-align:center;top:104.17px;font-size:11.5px;line-height:11.5px;color:#1f1f1f;">Doc</div>
<div id="t26" class="a" style="left:1411.75px;width:200px;text-align:center;top:104.17px;font-size:11.5px;line-height:11.5px;color:#1f1f1f;">CSS</div>
<div id="t27" class="a" style="left:1442.75px;width:200px;text-align:center;top:104.17px;font-size:11.5px;line-height:11.5px;color:#1f1f1f;">JS</div>
<div id="t28" class="a" style="left:1475.75px;width:200px;text-align:center;top:104.17px;font-size:11.5px;line-height:11.5px;color:#1f1f1f;">Font</div>
<div id="t29" class="a" style="left:1514.25px;width:200px;text-align:center;top:104.17px;font-size:11.5px;line-height:11.5px;color:#1f1f1f;">Img</div>
<div id="t30" class="a" style="left:1557.25px;width:200px;text-align:center;top:104.17px;font-size:11.5px;line-height:11.5px;color:#1f1f1f;">Media</div>
<div id="t31" class="a" style="left:1612.50px;width:200px;text-align:center;top:104.17px;font-size:11.5px;line-height:11.5px;color:#1f1f1f;">Manifest</div>
<div id="t32" class="a" style="left:1659.75px;width:200px;text-align:center;top:104.17px;font-size:11.5px;line-height:11.5px;color:#1f1f1f;">WS</div>
<div id="t33" class="a" style="left:1700.75px;width:200px;text-align:center;top:104.17px;font-size:11.5px;line-height:11.5px;color:#1f1f1f;">Wasm</div>
<div id="t34" class="a" style="left:1748.00px;width:200px;text-align:center;top:104.17px;font-size:11.5px;line-height:11.5px;color:#1f1f1f;">Other</div>
<div id="t35" class="a" style="left:827.70px;top:128.82px;font-size:12.5px;line-height:12.5px;color:#1f1f1f;letter-spacing:0.046px;">Blocked response cookies</div>
<div id="t36" class="a" style="left:1008.00px;top:128.82px;font-size:12.5px;line-height:12.5px;color:#1f1f1f;letter-spacing:0.007px;">Blocked requests</div>
<div id="t37" class="a" style="left:1138.30px;top:128.82px;font-size:12.5px;line-height:12.5px;color:#1f1f1f;letter-spacing:0.233px;">3rd-party requests</div>
<div id="t38" class="a" style="right:1016.30px;top:152.01px;font-size:10.5px;line-height:10.5px;color:#1f1f1f;">20 ms</div>
<div id="t39" class="a" style="right:910.66px;top:152.01px;font-size:10.5px;line-height:10.5px;color:#1f1f1f;">40 ms</div>
<div id="t40" class="a" style="right:805.02px;top:152.01px;font-size:10.5px;line-height:10.5px;color:#1f1f1f;">60 ms</div>
<div id="t41" class="a" style="right:699.38px;top:152.01px;font-size:10.5px;line-height:10.5px;color:#1f1f1f;">80 ms</div>
<div id="t42" class="a" style="right:593.74px;top:152.01px;font-size:10.5px;line-height:10.5px;color:#1f1f1f;">100 ms</div>
<div id="t43" class="a" style="right:488.10px;top:152.01px;font-size:10.5px;line-height:10.5px;color:#1f1f1f;">120 ms</div>
<div id="t44" class="a" style="right:382.46px;top:152.01px;font-size:10.5px;line-height:10.5px;color:#1f1f1f;">140 ms</div>
<div id="t45" class="a" style="right:276.82px;top:152.01px;font-size:10.5px;line-height:10.5px;color:#1f1f1f;">160 ms</div>
<div id="t46" class="a" style="right:171.18px;top:152.01px;font-size:10.5px;line-height:10.5px;color:#1f1f1f;">180 ms</div>
<div id="t47" class="a" style="right:65.54px;top:152.01px;font-size:10.5px;line-height:10.5px;color:#1f1f1f;">200 ms</div>
<div id="t48" class="a" style="left:806.00px;top:235.32px;font-size:12.5px;line-height:12.5px;color:#1f1f1f;letter-spacing:-0.115px;">Name</div>
<div id="t49" class="a" style="left:1215.00px;top:235.32px;font-size:12.5px;line-height:12.5px;color:#474747;letter-spacing:-0.075px;">Headers</div>
<div id="t50" class="a" style="left:1281.60px;top:235.32px;font-size:12.5px;line-height:12.5px;color:#474747;letter-spacing:-0.181px;">Payload</div>
<div id="t51" class="a" style="left:1345.50px;top:235.32px;font-size:12.5px;line-height:12.5px;color:#0b57d0;letter-spacing:0.005px;">Preview</div>
<div id="t52" class="a" style="left:1410.40px;top:235.32px;font-size:12.5px;line-height:12.5px;color:#474747;letter-spacing:-0.242px;">Response</div>
<div id="t53" class="a" style="left:1485.40px;top:235.32px;font-size:12.5px;line-height:12.5px;color:#474747;letter-spacing:0.525px;">Initiator</div>
<div id="t54" class="a" style="left:1551.00px;top:235.32px;font-size:12.5px;line-height:12.5px;color:#474747;letter-spacing:0.331px;">Timing</div>
<div id="t55" class="a" style="left:824.10px;top:260.88px;font-size:12.9px;line-height:12.9px;color:#1f1f1f;letter-spacing:0.147px;">getUserIntentionOpinionTop</div>
<div id="t56" class="a" style="left:824.10px;top:281.88px;font-size:12.9px;line-height:12.9px;color:#1f1f1f;letter-spacing:-0.124px;">getDataTrendChange</div>
<div id="t57" class="a" style="left:824.10px;top:302.88px;font-size:12.9px;line-height:12.9px;color:#1f1f1f;letter-spacing:0.020px;">get-tag-analysis</div>
<div id="t58" class="a" style="left:824.10px;top:323.88px;font-size:12.9px;line-height:12.9px;color:#1f1f1f;letter-spacing:-0.033px;">get-series-rank</div>
<div id="t59" class="a" style="left:824.10px;top:344.88px;font-size:12.9px;line-height:12.9px;color:#1f1f1f;letter-spacing:-0.114px;">getVocListSounds</div>
<div id="t60" class="a" style="left:811.00px;top:901.32px;font-size:12.5px;line-height:12.5px;color:#1f1f1f;letter-spacing:0.047px;">5 requests</div>
<div id="t61" class="a" style="left:889.30px;top:901.32px;font-size:12.5px;line-height:12.5px;color:#1f1f1f;letter-spacing:0.055px;">25.6 kB transferred</div>
<div id="t62" class="a" style="left:1016.70px;top:901.32px;font-size:12.5px;line-height:12.5px;color:#1f1f1f;letter-spacing:-0.097px;">24.1 kB resources</div>
<div id="t63" class="a" style="left:173.50px;top:8.52px;font-size:12.5px;line-height:12.5px;color:#333;letter-spacing:-0.027px;">Dimensions: Responsive</div>
<div id="t64" class="a" style="left:349.00px;top:8.32px;font-size:12.5px;line-height:12.5px;color:#333;letter-spacing:0.070px;">400</div>
<div id="t65" class="a" style="left:415.40px;top:8.32px;font-size:12.5px;line-height:12.5px;color:#767676;letter-spacing:-0.130px;">832</div>
<div id="t66" class="a" style="left:476.00px;top:8.32px;font-size:12.5px;line-height:12.5px;color:#333;letter-spacing:-0.661px;">100%</div>
<div id="t67" class="a" style="left:531.70px;top:8.32px;font-size:12.5px;line-height:12.5px;color:#333;letter-spacing:0.491px;">No throttling</div><div class="a" style="left:227px;top:374.3px;font-size:16.8px;line-height:16.8px;font-weight:bold;color:rgba(0,0,0,0.07);transform-origin:0 14.2px;transform:rotate(-44.6deg)">COCA15000511001</div><div class="a" style="left:893px;top:372.8px;font-size:16.8px;line-height:16.8px;font-weight:bold;color:rgba(0,0,0,0.07);transform-origin:0 14.2px;transform:rotate(-44.6deg)">COCA15000511001</div><div class="a" style="left:1558px;top:371.3px;font-size:16.8px;line-height:16.8px;font-weight:bold;color:rgba(0,0,0,0.07);transform-origin:0 14.2px;transform:rotate(-44.6deg)">COCA15000511001</div></body></html>
